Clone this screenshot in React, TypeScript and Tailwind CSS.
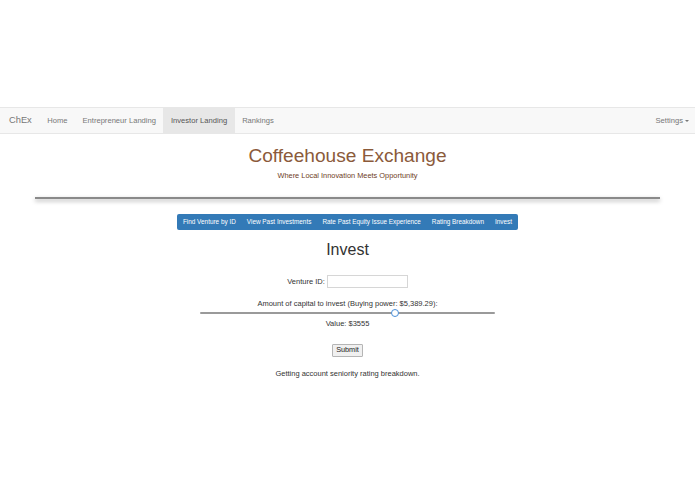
import React from "react";

const font = { fontFamily: '"Liberation Sans", Arial, sans-serif' };

const navLinks = ["Home", "Entrepreneur Landing", "Investor Landing", "Rankings"];
const tabs = [
  "Find Venture by ID",
  "View Past Investments",
  "Rate Past Equity Issue Experience",
  "Rating Breakdown",
  "Invest",
];

export default function App() {
  const buyingPower = 5389.29;
  const value = 3555;
  const pct = (value / buyingPower) * 100;

  return (
    <div className="min-h-[494px] w-[695px] bg-white text-[#333]" style={font}>
      <div className="h-[107px]" />
      {/* top navbar */}
      <nav className="flex h-[27px] items-stretch border-y border-[#e7e7e7] bg-[#f8f8f8] text-[7.6px] text-[#777]">
        <div className="flex items-center pl-[9px] pr-[8px] text-[9.3px] text-[#777]">ChEx</div>
        {navLinks.map((l) => (
          <div
            key={l}
            className={
              "flex items-center px-[7.5px] " +
              (l === "Investor Landing" ? "bg-[#e7e7e7] text-[#555]" : "")
            }
          >
            {l}
          </div>
        ))}
        <div className="ml-auto flex items-center gap-[2px] pr-[6px]">
          Settings
          <span className="inline-block border-x-[2px] border-t-[2.5px] border-x-transparent border-t-[#777]" />
        </div>
      </nav>

      {/* header */}
      <div className="flex flex-col items-center">
        <h1 className="mt-[11px] text-[19.1px] leading-[22px] text-[#8b5a3a]">Coffeehouse Exchange</h1>
        <p className="mt-[4px] text-[7.4px] leading-[9px] text-[#6e3d1e]">
          Where Local Innovation Meets Opportunity
        </p>
      </div>
      <div className="mx-[35px] mt-[17px] h-[2px] bg-[#8a8a8a] shadow-[0_2px_4px_rgba(0,0,0,0.35)]" />

      {/* tab bar */}
      <div className="mt-[15px] flex justify-center">
        <div className="flex h-[16px] items-center rounded-[2px] bg-[#337ab7] px-[0.5px] text-[6.4px] text-white">
          {tabs.map((t) => (
            <span key={t} className="px-[5.5px]">
              {t}
            </span>
          ))}
        </div>
      </div>

      {/* invest form */}
      <div className="flex flex-col items-center text-[7.5px] text-[#333]">
        <h2 className="mt-[11px] text-[16px] leading-[18px]">Invest</h2>
        <div className="mt-[16px] flex items-center gap-[2px]">
          <span>Venture ID:</span>
          <div className="h-[13px] w-[81px] border border-[#d6d6d6] bg-white" />
        </div>
        <div className="mt-[11px] leading-[9px]">
          Amount of capital to invest (Buying power: $5,389.29):
        </div>
        <div className="relative mt-[0px] h-[9px] w-[295px]">
          <div className="absolute left-0 right-0 top-[3.5px] h-[2px] rounded-full bg-[#9a9a9a]" />
          <div
            className="absolute top-[0.5px] h-[8px] w-[8px] -translate-x-1/2 rounded-full border-[1.5px] border-[#4a8fd9] bg-white"
            style={{ left: `${pct}%` }}
          />
        </div>
        <div className="mt-[2px] leading-[9px]">Value: ${value}</div>
        <div className="mt-[16px] flex h-[13px] w-[31px] items-center justify-center rounded-[1px] border border-[#b5b5b5] bg-[#f0f0f0] text-[7.3px] text-[#222]">
          Submit
        </div>
        <div className="mt-[12px] leading-[9px]">Getting account seniority rating breakdown.</div>
      </div>
    </div>
  );
}
